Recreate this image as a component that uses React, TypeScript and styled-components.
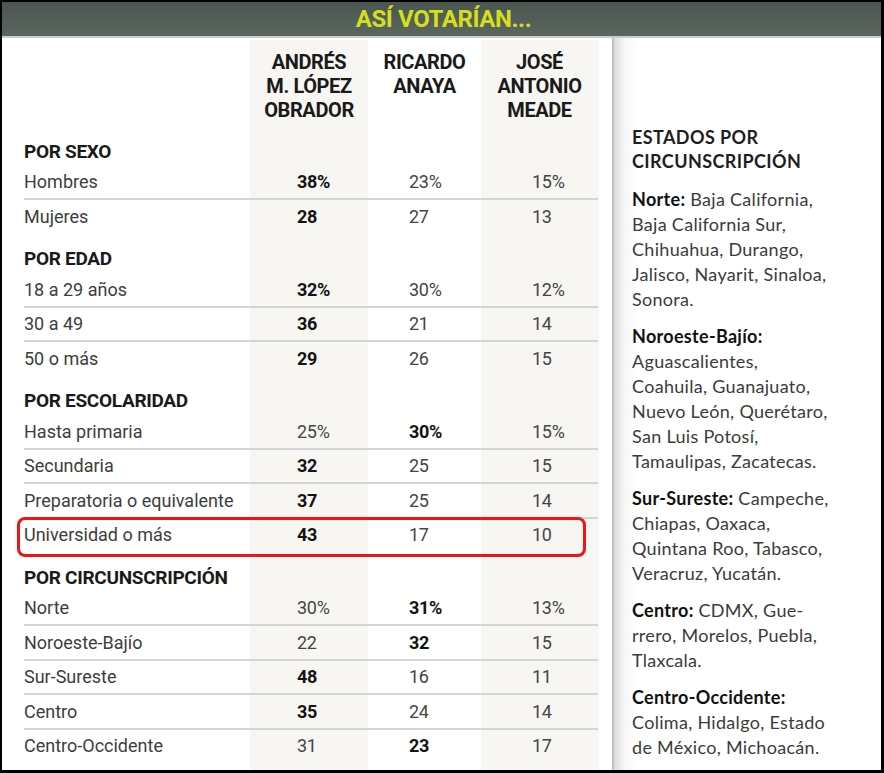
import React from 'react'
import styled, { createGlobalStyle } from 'styled-components'

const GlobalStyle = createGlobalStyle`
    html, body {
        margin: 0;
        padding: 0;
        background: #ffffff;
        font-family: Roboto, 'Liberation Sans', sans-serif;
    }
`

const Frame = styled.div`
    width: 884px;
    height: 773px;
    box-sizing: border-box;
    border-style: solid;
    border-color: #000000;
    border-width: 2px 3px 3px 2px;
    display: flex;
    flex-direction: column;
    background: #ffffff;
    overflow: hidden;
`

const TitleBar = styled.div`
    height: 34px;
    flex: none;
    display: flex;
    align-items: center;
    justify-content: center;
    background: linear-gradient(to bottom, #4b5550, #5c6660);
    border-bottom: 2px solid #c9ccca;
`

const Title = styled.h1`
    margin: 0 0 0 4px;
    font-family: Roboto, sans-serif;
    font-size: 24px;
    font-weight: 700;
    letter-spacing: -0.4px;
    color: #d3df1d;
`

const Body = styled.div`
    flex: 1;
    display: flex;
    min-height: 0;
`

const TablePanel = styled.div`
    width: 610px;
    flex: none;
    box-sizing: border-box;
    padding: 12px 0 0 22px;
    background: linear-gradient(
            to right,
            transparent 248px,
            #f7f6f2 248px 366px,
            transparent 366px 479px,
            #f7f6f2 479px 597px,
            transparent 597px
        )
        no-repeat 0 2px / 100% 100%;
`

const cols = '226px 118px 113px 117px'

const NameRow = styled.div`
    display: grid;
    grid-template-columns: ${cols};
    margin-bottom: 3px;
`

const Name = styled.div`
    font-family: Roboto, sans-serif;
    font-size: 20px;
    font-weight: 700;
    line-height: 24px;
    letter-spacing: -0.4px;
    color: #1a1a1a;
    text-align: center;
    white-space: nowrap;
`

const SectionTitle = styled.div`
    height: 40.5px;
    box-sizing: border-box;
    display: flex;
    align-items: flex-end;
    padding-bottom: 3px;
    font-family: Roboto, sans-serif;
    font-size: 19px;
    font-weight: 700;
    line-height: 22px;
    letter-spacing: -0.3px;
    color: #1a1a1a;
    width: 574px;
`

const Row = styled.div<{ $highlight?: boolean }>`
    position: relative;
    display: grid;
    grid-template-columns: ${cols};
    width: 574px;
    height: 32.5px;
    align-items: center;

    & + & {
        border-top: 2px solid #d4d5d6;
    }

    ${p =>
        p.$highlight &&
        `
        &::after {
            content: '';
            position: absolute;
            left: -7px;
            right: 12px;
            top: -2px;
            bottom: -6px;
            border: 3px solid #f01515;
            border-radius: 8px;
        }
    `}
`

const Label = styled.div`
    font-family: Roboto, sans-serif;
    font-size: 18px;
    font-weight: 400;
    color: #3d3d3d;
    white-space: nowrap;
`

const Value = styled.div<{ $bold?: boolean; $offset: number }>`
    padding-left: ${p => p.$offset}px;
    font-family: Roboto, sans-serif;
    font-size: 18px;
    font-weight: ${p => (p.$bold ? 700 : 400)};
    color: ${p => (p.$bold ? '#141414' : '#454545')};
    letter-spacing: -0.3px;
`

const SidePanel = styled.div`
    flex: 1;
    border-left: 2px solid #bfc0c0;
    background: linear-gradient(to right, #dcdcdc, #f6f6f6 10px, #ffffff 22px);
    padding: 87px 0 0 18px;
`

const SideTitle = styled.h2`
    margin: 0 0 14px;
    font-family: Lato, 'Open Sans', sans-serif;
    font-size: 18px;
    font-weight: 700;
    line-height: 24px;
    letter-spacing: 0.4px;
    color: #1e1e1e;
`

const StateList = styled.p`
    margin: 0 0 12px;
    font-family: Lato, 'Open Sans', sans-serif;
    font-size: 18px;
    line-height: 25px;
    letter-spacing: 0.3px;
    color: #3b3b3b;
    white-space: nowrap;

    b {
        font-weight: 700;
        color: #111111;
    }
`

const offsets = [47, 41, 51]

type DataRow = { label: string; values: string[]; bold: number; highlight?: boolean }
type Section = { title: string; rows: DataRow[] }

const sections: Section[] = [
    {
        title: 'POR SEXO',
        rows: [
            { label: 'Hombres', values: ['38%', '23%', '15%'], bold: 0 },
            { label: 'Mujeres', values: ['28', '27', '13'], bold: 0 },
        ],
    },
    {
        title: 'POR EDAD',
        rows: [
            { label: '18 a 29 años', values: ['32%', '30%', '12%'], bold: 0 },
            { label: '30 a 49', values: ['36', '21', '14'], bold: 0 },
            { label: '50 o más', values: ['29', '26', '15'], bold: 0 },
        ],
    },
    {
        title: 'POR ESCOLARIDAD',
        rows: [
            { label: 'Hasta primaria', values: ['25%', '30%', '15%'], bold: 1 },
            { label: 'Secundaria', values: ['32', '25', '15'], bold: 0 },
            { label: 'Preparatoria o equivalente', values: ['37', '25', '14'], bold: 0 },
            { label: 'Universidad o más', values: ['43', '17', '10'], bold: 0, highlight: true },
        ],
    },
    {
        title: 'POR CIRCUNSCRIPCIÓN',
        rows: [
            { label: 'Norte', values: ['30%', '31%', '13%'], bold: 1 },
            { label: 'Noroeste-Bajío', values: ['22', '32', '15'], bold: 1 },
            { label: 'Sur-Sureste', values: ['48', '16', '11'], bold: 0 },
            { label: 'Centro', values: ['35', '24', '14'], bold: 0 },
            { label: 'Centro-Occidente', values: ['31', '23', '17'], bold: 1 },
        ],
    },
]

const candidates = [
    ['ANDRÉS', 'M. LÓPEZ', 'OBRADOR'],
    ['RICARDO', 'ANAYA'],
    ['JOSÉ', 'ANTONIO', 'MEADE'],
]

const states: { name: string; lines: string[] }[] = [
    {
        name: 'Norte:',
        lines: [' Baja California,', 'Baja California Sur,', 'Chihuahua, Durango,', 'Jalisco, Nayarit, Sinaloa,', 'Sonora.'],
    },
    {
        name: 'Noroeste-Bajío:',
        lines: ['', 'Aguascalientes,', 'Coahuila, Guanajuato,', 'Nuevo León, Querétaro,', 'San Luis Potosí,', 'Tamaulipas, Zacatecas.'],
    },
    {
        name: 'Sur-Sureste:',
        lines: [' Campeche,', 'Chiapas, Oaxaca,', 'Quintana Roo, Tabasco,', 'Veracruz, Yucatán.'],
    },
    {
        name: 'Centro:',
        lines: [' CDMX, Gue-', 'rrero, Morelos, Puebla,', 'Tlaxcala.'],
    },
    {
        name: 'Centro-Occidente:',
        lines: ['', 'Colima, Hidalgo, Estado', 'de México, Michoacán.'],
    },
]

const App = () => {
    return (
        <>
            <GlobalStyle />
            <Frame>
                <TitleBar>
                    <Title>ASÍ VOTARÍAN...</Title>
                </TitleBar>
                <Body>
                    <TablePanel>
                        <NameRow>
                            <div />
                            {candidates.map(lines => (
                                <Name key={lines[0]}>
                                    {lines.map(l => (
                                        <div key={l}>{l}</div>
                                    ))}
                                </Name>
                            ))}
                        </NameRow>
                        {sections.map(section => (
                            <div key={section.title}>
                                <SectionTitle>{section.title}</SectionTitle>
                                {section.rows.map(row => (
                                    <Row key={row.label} $highlight={row.highlight}>
                                        <Label>{row.label}</Label>
                                        {row.values.map((v, i) => (
                                            <Value key={i} $offset={offsets[i]} $bold={i === row.bold}>
                                                {v}
                                            </Value>
                                        ))}
                                    </Row>
                                ))}
                            </div>
                        ))}
                    </TablePanel>
                    <SidePanel>
                        <SideTitle>
                            ESTADOS POR
                            <br />
                            CIRCUNSCRIPCIÓN
                        </SideTitle>
                        {states.map(s => (
                            <StateList key={s.name}>
                                <b>{s.name}</b>
                                {s.lines.map((l, i) => (
                                    <React.Fragment key={i}>
                                        {i > 0 && <br />}
                                        {l}
                                    </React.Fragment>
                                ))}
                            </StateList>
                        ))}
                    </SidePanel>
                </Body>
            </Frame>
        </>
    )
}

export default App
